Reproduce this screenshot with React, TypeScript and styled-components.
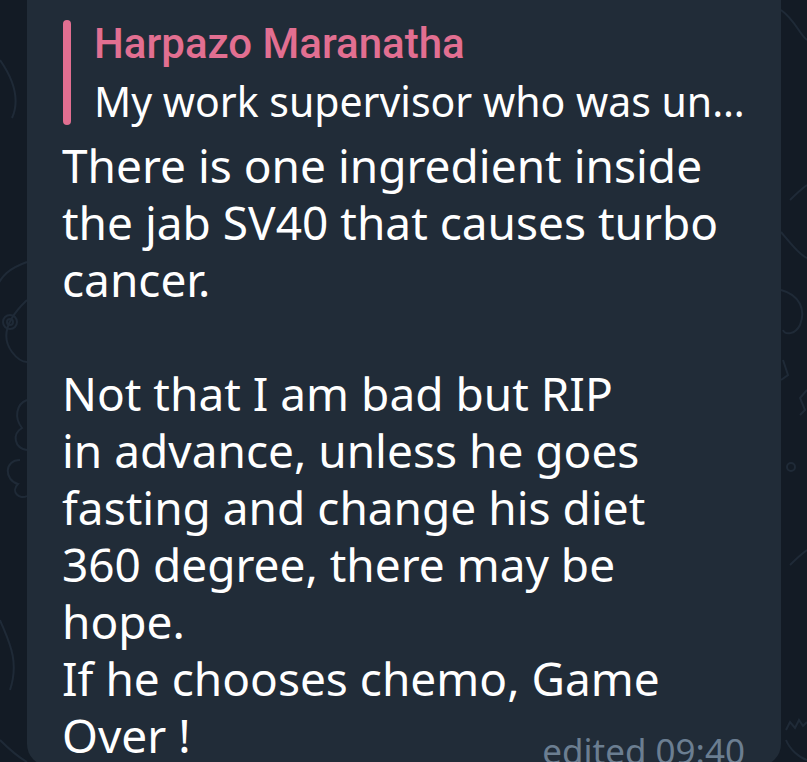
import React from "react";
import styled, { createGlobalStyle } from "styled-components";

const GlobalStyle = createGlobalStyle`
  html, body {
    margin: 0;
    padding: 0;
    height: 100%;
    overflow: hidden;
    background-color: #131b25;
  }
`;

const Screen = styled.div`
  position: relative;
  width: 807px;
  height: 762px;
  overflow: hidden;
  background-color: #131b25;
`;

const Doodles = styled.svg`
  position: absolute;
  inset: 0;
  width: 807px;
  height: 762px;
  pointer-events: none;
`;

const Bubble = styled.div`
  position: relative;
  margin-left: 27px;
  width: 754px;
  height: 766px;
  box-sizing: border-box;
  padding: 20px 0 0 36px;
  background-color: #212c38;
  border-radius: 0 0 22px 22px;
  font-family: "Noto Sans", "DejaVu Sans", sans-serif;
  color: #ffffff;
`;

const Reply = styled.div`
  display: flex;
  gap: 23px;
  height: 105px;
`;

const ReplyBar = styled.div`
  width: 8px;
  flex-shrink: 0;
  border-radius: 4px;
  background-color: #e26f91;
`;

const ReplyBody = styled.div`
  display: flex;
  flex-direction: column;
`;

const ReplyName = styled.div`
  font-family: Roboto, "Noto Sans", sans-serif;
  font-weight: 500;
  font-size: 42px;
  line-height: 48px;
  color: #e26f91;
  white-space: nowrap;
`;

const ReplyText = styled.div`
  margin-top: 9px;
  font-size: 41px;
  line-height: 48px;
  color: #ffffff;
  white-space: nowrap;
`;

const Message = styled.div`
  margin-top: 12px;
  margin-left: -1px;
  font-size: 46px;
  line-height: 57px;
  white-space: nowrap;
`;

const Line = styled.div<{ $gap?: boolean }>`
  height: 57px;
  margin-top: ${(p) => (p.$gap ? "57px" : "0")};
`;

const Stamp = styled.div`
  position: absolute;
  right: 36px;
  bottom: -5px;
  font-size: 35px;
  line-height: 40px;
  color: #6b7e91;
  white-space: nowrap;
`;

const lines = [
  "There is one ingredient inside",
  "the jab SV40 that causes turbo",
  "cancer.",
  "Not that I am bad but RIP",
  "in advance, unless he goes",
  "fasting and change his diet",
  "360 degree, there may be",
  "hope.",
  "If he chooses chemo, Game",
  "Over !",
];

const App = () => {
  return (
    <Screen>
      <GlobalStyle />
      <Doodles viewBox="0 0 807 762" fill="none" stroke="#1f2a37" strokeWidth="2">
        <path d="M0 60 C14 80 20 100 12 118" />
        <path d="M27 262 C10 268 0 276 -4 290" />
        <circle cx="10" cy="322" r="7" />
        <circle cx="10" cy="322" r="3" />
        <path d="M27 300 C8 318 0 336 12 352 C18 360 24 362 27 362" />
        <path d="M27 400 C16 404 14 418 22 428 C12 434 14 448 27 450" />
        <path d="M20 460 C4 460 4 480 18 484 C10 492 20 500 27 496" />
        <path d="M0 620 C8 640 20 660 10 690" />
        <path d="M0 740 C10 750 20 758 27 762" />
        <path d="M781 10 C795 20 800 35 807 40" />
        <path d="M790 200 C800 190 807 185 807 185" />
        <path d="M781 232 C792 245 800 255 807 258" />
        <path d="M781 290 C800 295 806 310 800 325 C795 335 785 335 783 330" />
        <path d="M783 360 L788 375 L781 380" />
        <path d="M807 390 L800 398 L805 410 L800 415" />
        <circle cx="791" cy="467" r="4" />
        <path d="M790 565 C800 555 807 550 807 550" />
        <path d="M786 730 L790 722 L795 728 L799 720 L803 726 L807 722" />
        <path d="M786 740 C790 750 800 758 807 760" />
      </Doodles>
      <Bubble>
        <Reply>
          <ReplyBar />
          <ReplyBody>
            <ReplyName>Harpazo Maranatha</ReplyName>
            <ReplyText>My work supervisor who was un…</ReplyText>
          </ReplyBody>
        </Reply>
        <Message>
          {lines.map((l, i) => (
            <Line key={i} $gap={i === 3}>
              {l}
            </Line>
          ))}
        </Message>
        <Stamp>edited 09:40</Stamp>
      </Bubble>
    </Screen>
  );
};

export default App;
